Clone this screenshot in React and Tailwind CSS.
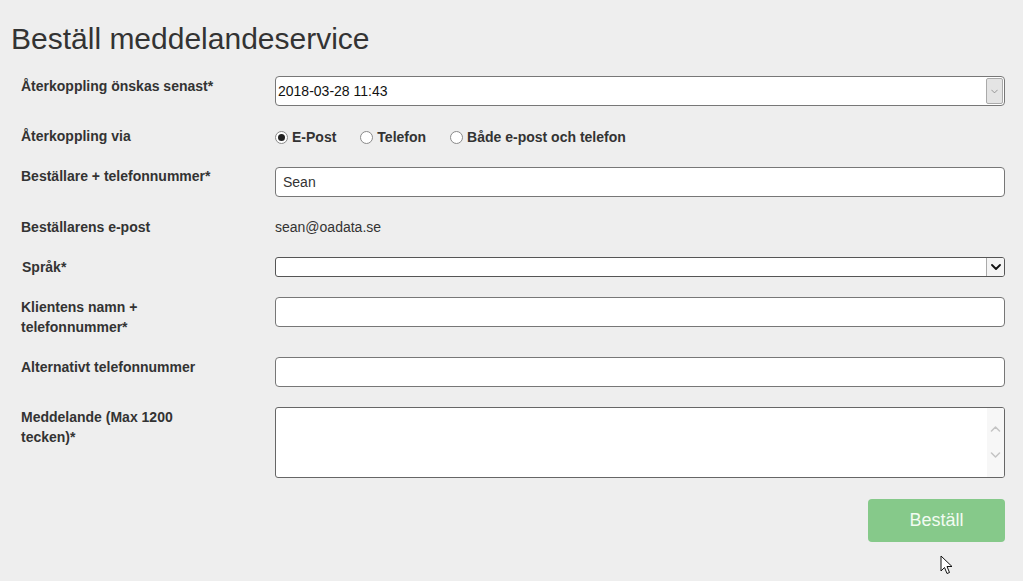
import React, { useState } from 'react';

function Radio({ checked, label, onClick }) {
  return (
    <button type="button" onClick={onClick} className="flex items-center gap-[4px] mr-[24px]">
      <span className="w-[13px] h-[13px] rounded-full border border-[#8a8a8a] bg-white flex items-center justify-center">
        {checked && <span className="w-[7px] h-[7px] rounded-full bg-[#222]" />}
      </span>
      <span className="font-bold text-[14px] text-[#333]">{label}</span>
    </button>
  );
}

function Row({ label, children }) {
  return (
    <div className="flex items-start">
      <div className="w-[254px] shrink-0 pr-8 font-bold text-[14px] leading-5 text-[#333]">{label}</div>
      <div className="w-[730px]">{children}</div>
    </div>
  );
}

function Chevron({ className, stroke = '#999', width = 1.2 }) {
  return (
    <svg viewBox="0 0 10 6" className={className} fill="none" stroke={stroke} strokeWidth={width} strokeLinecap="round" strokeLinejoin="round">
      <path d="M1 1l4 4 4-4" />
    </svg>
  );
}

export default function App() {
  const [via, setVia] = useState('epost');
  const [namn, setNamn] = useState('Sean');

  return (
    <div className="relative min-h-screen bg-[#eeeeee] font-['Liberation_Sans',Arial,sans-serif] text-[#333]">
      <h1 className="pl-[11px] pt-[22px] text-[30px] leading-[34px] text-[#333]">Beställ meddelandeservice</h1>

      <div className="pl-[21px] pt-[20px] flex flex-col gap-5">
        <Row label="Återkoppling önskas senast*">
          <div className="h-[30px] flex items-stretch rounded-[4px] border border-[#777] bg-white overflow-hidden">
            <div className="flex-1 flex items-center pl-[2px] text-[14px] text-[#111]">2018-03-28 11:43</div>
            <div className="w-[17px] my-[1px] mr-[1px] border border-[#aaa] rounded-[2px] bg-[#e4e4e4] flex items-center justify-center">
              <Chevron className="w-[7px] h-[5px]" stroke="#888" />
            </div>
          </div>
        </Row>

        <Row label="Återkoppling via">
          <div className="h-5 flex items-center pt-[2px]">
            <Radio checked={via === 'epost'} label="E-Post" onClick={() => setVia('epost')} />
            <Radio checked={via === 'tel'} label="Telefon" onClick={() => setVia('tel')} />
            <Radio checked={via === 'bada'} label="Både e-post och telefon" onClick={() => setVia('bada')} />
          </div>
        </Row>

        <Row label="Beställare + telefonnummer*">
          <input
            value={namn}
            onChange={(e) => setNamn(e.target.value)}
            className="w-full h-[30px] mt-[1px] rounded-[4px] border border-[#777] bg-white px-[7px] text-[14px] text-[#333] outline-none"
          />
        </Row>

        <Row label="Beställarens e-post">
          <div className="h-5 leading-5 text-[14px] text-[#333]">sean@oadata.se</div>
        </Row>

        <Row label={<span className="pl-[1px]">Språk*</span>}>
          <div className="h-5 flex items-stretch rounded-[3px] border border-[#555] bg-white overflow-hidden">
            <div className="flex-1" />
            <div className="w-[18px] border-l border-[#aaa] bg-[#f4f4f4] flex items-center justify-center">
              <Chevron className="w-[10px] h-[6px]" stroke="#111" width={1.8} />
            </div>
          </div>
        </Row>

        <Row label={<>Klientens namn +<br />telefonnummer*</>}>
          <input className="w-full h-[30px] rounded-[4px] border border-[#777] bg-white px-[7px] text-[14px] outline-none" />
        </Row>

        <Row label="Alternativt telefonnummer">
          <input className="w-full h-[30px] rounded-[4px] border border-[#777] bg-white px-[7px] text-[14px] outline-none" />
        </Row>

        <Row label={<>Meddelande (Max 1200<br />tecken)*</>}>
          <div className="h-[71px] flex items-stretch rounded-[3px] border border-[#666] bg-white overflow-hidden">
            <textarea className="flex-1 resize-none outline-none px-[7px] py-1 text-[14px]" />
            <div className="w-[17px] bg-[#f7f7f7] flex flex-col items-center pt-[18px] gap-[20px]">
              <Chevron className="w-[11px] h-[6px] rotate-180" stroke="#c4c4c4" width={1.5} />
              <Chevron className="w-[11px] h-[6px]" stroke="#c4c4c4" width={1.5} />
            </div>
          </div>
        </Row>

        <div className="w-[984px] flex justify-end mt-[1px]">
          <button type="button" className="w-[137px] h-[43px] rounded-[4px] bg-[#86c98a] text-[#f2fbf2] text-[18px]">
            Beställ
          </button>
        </div>
      </div>

      <svg className="absolute left-[940px] top-[555px] w-[13px] h-[20px]" viewBox="0 0 13 20">
        <path d="M1 1v15l3.5-3.5 2.5 6 2.5-1-2.5-6H12z" fill="#fff" stroke="#111" strokeWidth="1" strokeLinejoin="round" />
      </svg>
    </div>
  );
}
